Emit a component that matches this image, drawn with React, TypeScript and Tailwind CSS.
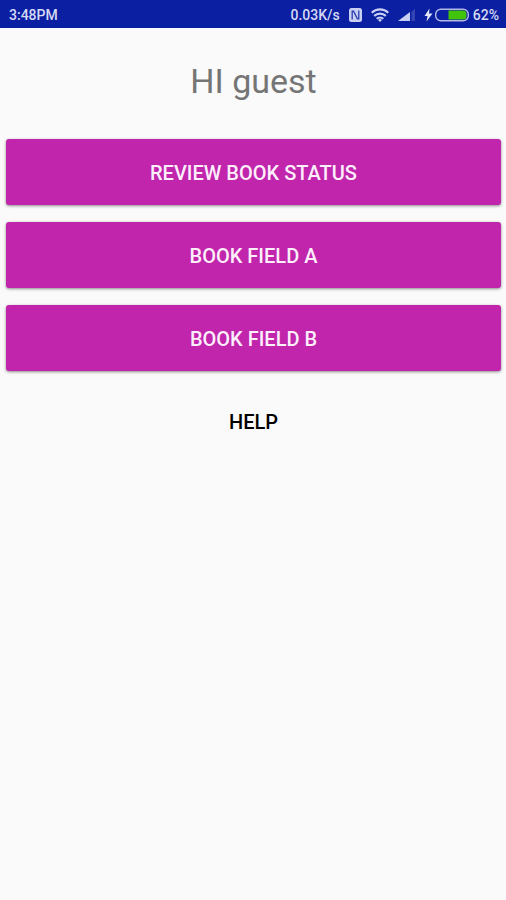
import React from 'react';

const NfcIcon: React.FC = () => (
  <svg className="h-[14px] w-[13px]" viewBox="0 0 13 14" fill="none" aria-hidden="true">
    <rect x="0" y="0" width="13" height="14" rx="2.5" fill="#c9cff2" />
    <path d="M3.2 11.4V3.2h1.400l3.800 7.600h1.400V2.600" stroke="#2b3cb3" strokeWidth="1.300" />
  </svg>
);

const WifiIcon: React.FC = () => (
  <svg className="h-[14px] w-[18px]" viewBox="0 0 18 14" fill="none" stroke="#c9cff2" strokeWidth="2.200" aria-hidden="true">
    <path d="M0.700 4.800a12 12 0 0 1 16.600 0" />
    <path d="M3.200 7.900a8.400 8.400 0 0 1 11.600 0" />
    <path d="M5.700 10.800a4.800 4.800 0 0 1 6.600 0" />
    <path d="M9 14l-2-2a3 3 0 0 1 4 0z" fill="#c9cff2" stroke="none" />
  </svg>
);

const SignalIcon: React.FC = () => (
  <svg className="h-3 w-[17px]" viewBox="0 0 17 12" aria-hidden="true">
    <path d="M13.500 2.500L17 0v12h-3.500z" fill="#3444b4" />
    <path d="M0 12L12 3V12z" fill="#c9cff2" />
  </svg>
);

const BatteryIcon: React.FC = () => (
  <svg className="h-[14px] w-[45px]" viewBox="0 0 45 14" aria-hidden="true">
    <path d="M5.500 0.500L0.500 8h3L2.500 13.500l6-8H5z" fill="#e3e6f8" />
    <rect x="11.700" y="1.200" width="32.600" height="11.600" rx="5" fill="none" stroke="#b3b9e6" strokeWidth="1.400" />
    <path d="M24.500 2.500H39a3.500 3.500 0 0 1 3.500 3.500v2A3.500 3.500 0 0 1 39 11.500H24.500z" fill="#43c40c" />
  </svg>
);

const actions = ['Review book status', 'Book field A', 'Book field B'];

const App: React.FC = () => {
  return (
    <div className="min-h-screen bg-[#fafafa] font-[Roboto,sans-serif]">
      <header className="flex h-7 items-center justify-between bg-[#0b1fa3] pt-0.5 pr-[7px] pl-[9px] text-sm font-medium text-[#d5d9f3]">
        <span>3:48PM</span>
        <div className="flex items-center gap-[9px]">
          <span>0.03K/s</span>
          <NfcIcon />
          <WifiIcon />
          <SignalIcon />
          <div className="flex items-center gap-1">
            <BatteryIcon />
            <span>62%</span>
          </div>
        </div>
      </header>
      <main className="flex flex-col pt-8 pr-[5px] pl-[6px]">
        <h1 className="text-center text-[34px] leading-[43px] text-[#757575]">HI guest</h1>
        <div className="mt-9 flex flex-col gap-[17px]">
          {actions.map((label) => (
            <button
              key={label}
              type="button"
              className="h-[66px] rounded-[3px] bg-[#c025ac] pt-0.5 text-xl font-medium text-[#fdeefb] uppercase shadow-[0_1px_3px_rgba(0,0,0,0.45)]"
            >
              {label}
            </button>
          ))}
        </div>
        <button type="button" className="mt-[17px] h-[66px] pt-0.5 text-xl font-medium text-black uppercase">
          Help
        </button>
      </main>
    </div>
  );
};

export default App;
